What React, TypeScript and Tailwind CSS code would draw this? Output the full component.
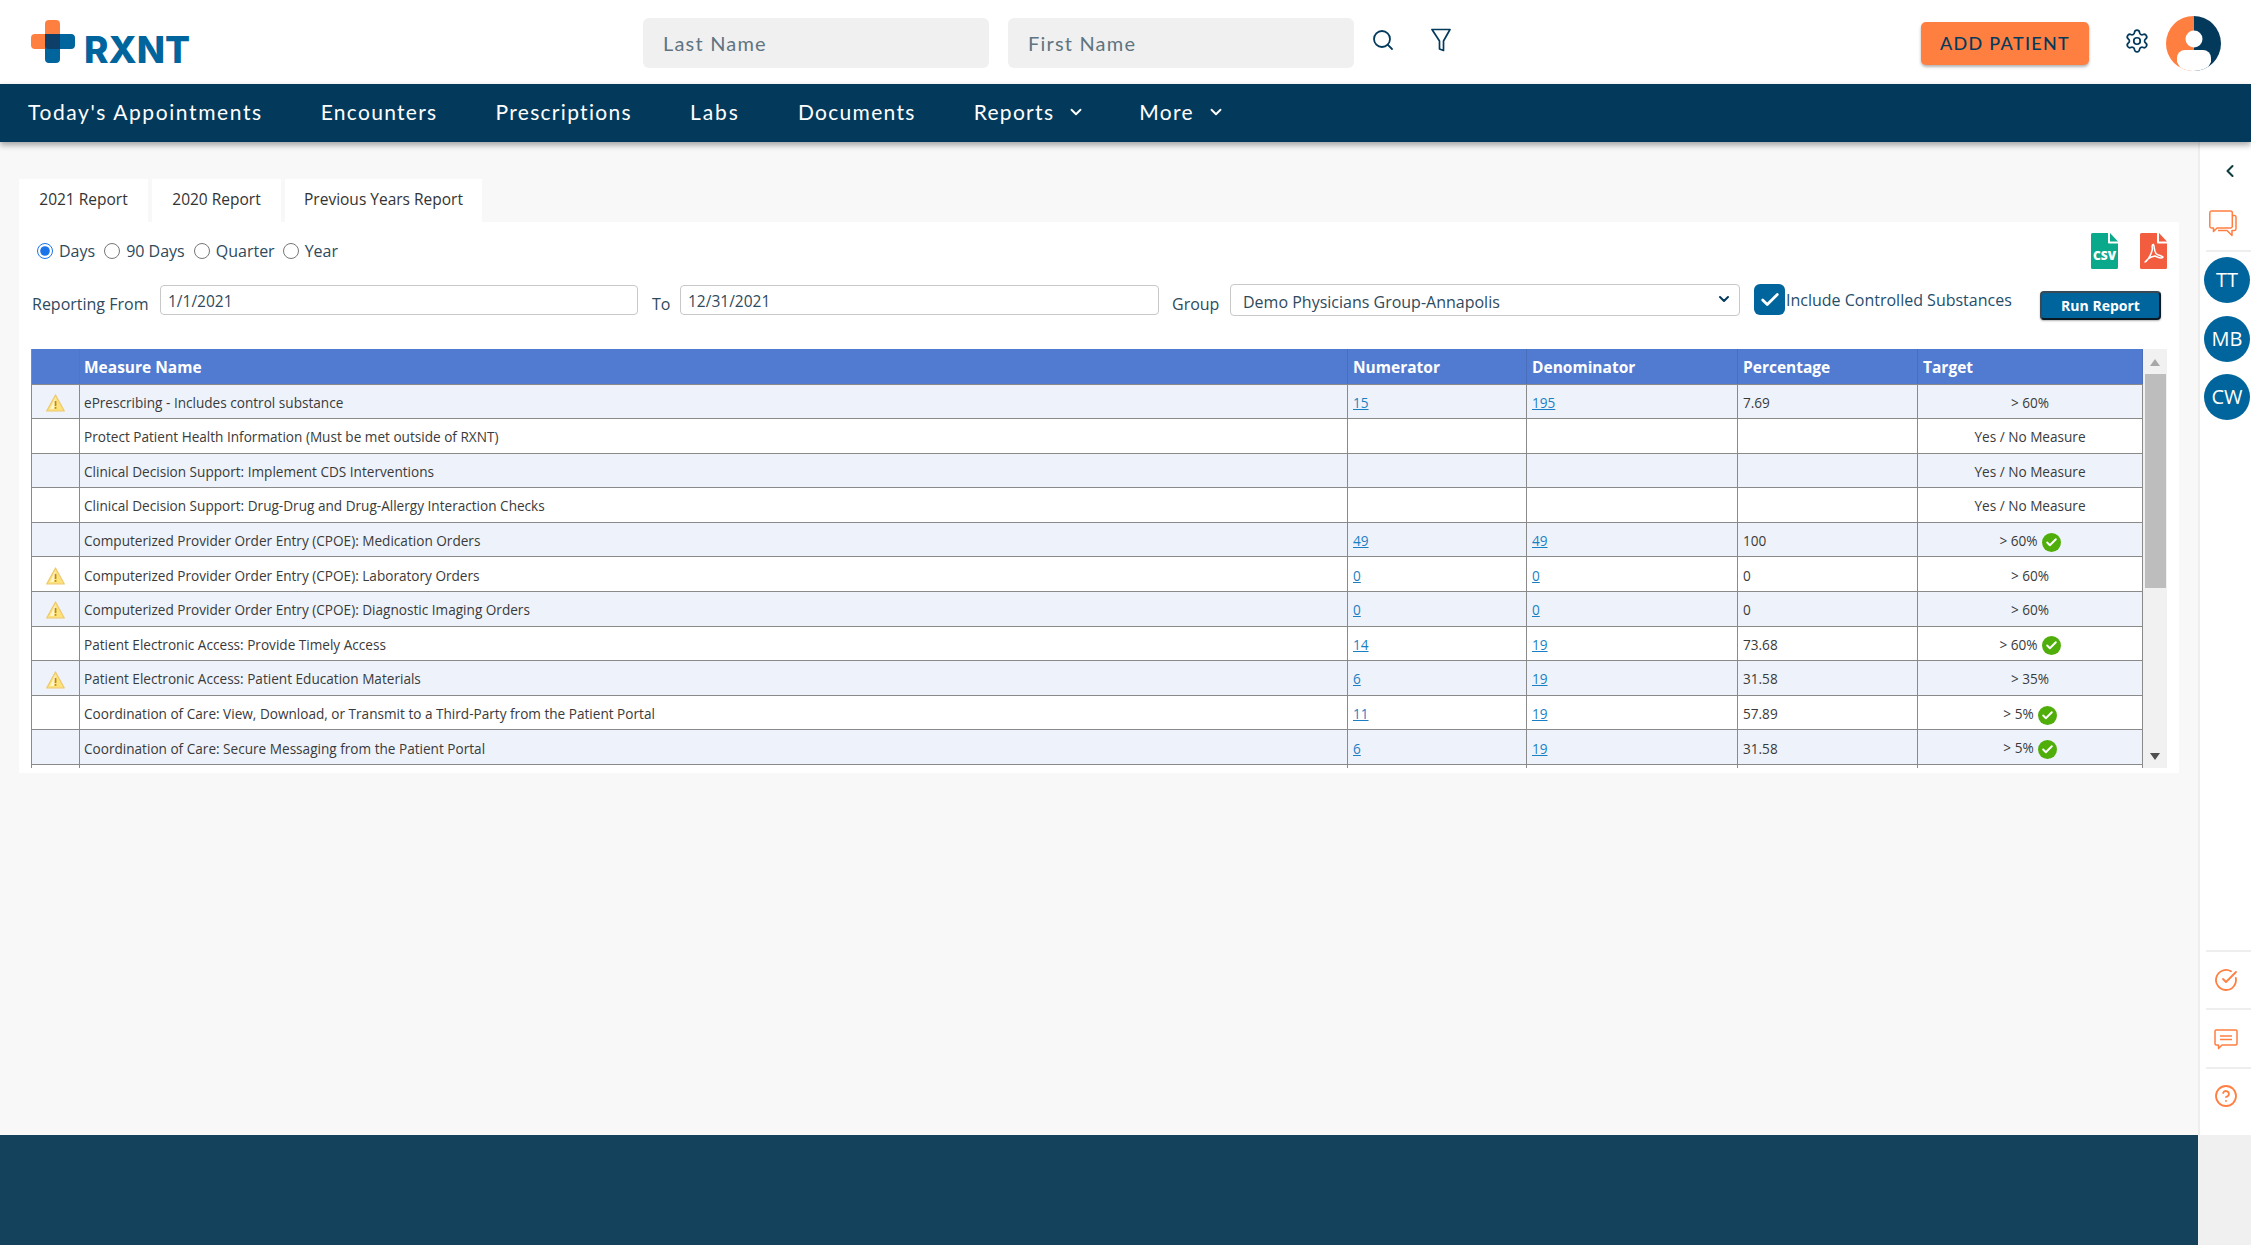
import React from 'react';
import { ChevronDown, ChevronLeft, CircleCheckBig, CircleHelp, Search, Settings, Check } from 'lucide-react';

type Row = { name: string; warn?: boolean; num?: string; den?: string; pct?: string; target: string; met?: boolean };

const rows: Row[] = [
  { name: 'ePrescribing - Includes control substance', warn: true, num: '15', den: '195', pct: '7.69', target: '> 60%' },
  { name: 'Protect Patient Health Information (Must be met outside of RXNT)', target: 'Yes / No Measure' },
  { name: 'Clinical Decision Support: Implement CDS Interventions', target: 'Yes / No Measure' },
  { name: 'Clinical Decision Support: Drug-Drug and Drug-Allergy Interaction Checks', target: 'Yes / No Measure' },
  { name: 'Computerized Provider Order Entry (CPOE): Medication Orders', num: '49', den: '49', pct: '100', target: '> 60%', met: true },
  { name: 'Computerized Provider Order Entry (CPOE): Laboratory Orders', warn: true, num: '0', den: '0', pct: '0', target: '> 60%' },
  { name: 'Computerized Provider Order Entry (CPOE): Diagnostic Imaging Orders', warn: true, num: '0', den: '0', pct: '0', target: '> 60%' },
  { name: 'Patient Electronic Access: Provide Timely Access', num: '14', den: '19', pct: '73.68', target: '> 60%', met: true },
  { name: 'Patient Electronic Access: Patient Education Materials', warn: true, num: '6', den: '19', pct: '31.58', target: '> 35%' },
  { name: 'Coordination of Care: View, Download, or Transmit to a Third-Party from the Patient Portal', num: '11', den: '19', pct: '57.89', target: '> 5%', met: true },
  { name: 'Coordination of Care: Secure Messaging from the Patient Portal', num: '6', den: '19', pct: '31.58', target: '> 5%', met: true },
];

const Logo = () => (
  <div className="flex items-end gap-[9px]">
    <svg width="44" height="43" viewBox="0 0 44 43">
      <path d="M14 4a4 4 0 0 1 4-4h7a4 4 0 0 1 4 4v25H4a4 4 0 0 1-4-4v-7a4 4 0 0 1 4-4h10z" fill="#ff7f41" />
      <path d="M14 14h26a4 4 0 0 1 4 4v7a4 4 0 0 1-4 4H29v10a4 4 0 0 1-4 4h-7a4 4 0 0 1-4-4z" fill="#00659c" />
      <path d="M14 14h15v15H18a4 4 0 0 1-4-4z" fill="#0d3f68" />
    </svg>
    <span className="font-['Inter',sans-serif] text-[37px] leading-[28px] font-extrabold text-[#00659c] h-[28px] -mb-px">RXNT</span>
  </div>
);

const Avatar = () => (
  <svg width="55" height="55" viewBox="0 0 55 55">
    <defs>
      <clipPath id="av"><circle cx="27.5" cy="27.5" r="27.5" /></clipPath>
    </defs>
    <g clipPath="url(#av)">
      <rect width="28" height="55" fill="#ff7f41" />
      <rect x="28" width="27" height="55" fill="#033a5c" />
      <circle cx="28" cy="23" r="8.5" fill="#fff" />
      <path d="M11 46v-4a8 8 0 0 1 8-8h18a8 8 0 0 1 8 8v4l-5 9H16z" fill="#fff" />
    </g>
  </svg>
);

const WarnIcon = () => (
  <svg width="19" height="18" viewBox="0 0 19 18" className="mx-auto block">
    <path d="M9.5 1 18.3 17H.7z" fill="#fde27c" stroke="#eec76e" strokeWidth="1.2" strokeLinejoin="round" />
    <path d="M9.5 3.5 4 15h4z" fill="#fff6cf" />
    <rect x="8.7" y="7" width="1.7" height="5" fill="#b98a17" />
    <rect x="8.7" y="13" width="1.7" height="1.8" fill="#b98a17" />
  </svg>
);

const MetIcon = () => (
  <span className="inline-flex items-center justify-center w-[19px] h-[19px] rounded-full bg-[#4fae0a] ml-[4px] align-middle">
    <Check size={13} color="#fff" strokeWidth={3.5} />
  </span>
);

const FileIcon = ({ color, children }: { color: string; children: React.ReactNode }) => (
  <svg width="27" height="36" viewBox="0 0 27 36">
    <path d="M1.5 0H17v9.5a1 1 0 0 0 1 1h9V34.5a1.5 1.5 0 0 1-1.500 1.500H1.500A1.500 1.500 0 0 1 0 34.500V1.500A1.500 1.500 0 0 1 1.500 0z" fill={color} />
    <path d="M19 0l8 8.500h-8z" fill={color} />
    {children}
  </svg>
);

const ChatIcon = () => (
  <svg width="28" height="27" viewBox="0 0 28 27" fill="none" stroke="#ff7f41" strokeWidth="1.5" strokeLinejoin="round">
    <path d="M24 5.500h1.500A1.800 1.800 0 0 1 27 7.300v11.500a1.800 1.800 0 0 1-1.500 1.700H23v5l-5-5H9" />
    <path d="M2.500 1h19a1.800 1.800 0 0 1 1.800 1.800v13.400a1.800 1.800 0 0 1-1.800 1.800H8l-3.500 3.500V18h-2A1.800 1.800 0 0 1 .8 16.200V2.800A1.800 1.800 0 0 1 2.500 1z" />
  </svg>
);

const CommentIcon = () => (
  <svg width="24" height="21" viewBox="0 0 24 21" fill="none" stroke="#ff7f41" strokeWidth="1.500" strokeLinejoin="round">
    <path d="M2.200 1h19.600A1.200 1.200 0 0 1 23 2.200v12.600a1.200 1.200 0 0 1-1.200 1.200H8l-3.500 3.500V16H2.200A1.200 1.200 0 0 1 1 14.800V2.200A1.200 1.200 0 0 1 2.200 1z" />
    <path d="M6 7h12M6 10.500h12" />
  </svg>
);

const SidebarDivider = () => <div className="h-[2px] bg-[#eeeeee] ml-[6px]" />;

const Initials = ({ text }: { text: string }) => (
  <div className="w-[46px] h-[46px] rounded-full bg-[#00659c] text-white text-[20px] flex items-center justify-center ml-[4px]">{text}</div>
);

const cellBorder = 'border-r border-b border-[#8a8a8a]';

const ReportTable = () => (
  <div className="flex h-[419px] overflow-hidden">
    <table className="table-fixed border-collapse w-[2111px] h-fit border-l border-[#8a8a8a] text-[13.6px] text-[#3a3a3a]">
      <colgroup>
        <col className="w-[48px]" />
        <col className="w-[1268px]" />
        <col className="w-[179px]" />
        <col className="w-[211px]" />
        <col className="w-[180px]" />
        <col className="w-[225px]" />
      </colgroup>
      <thead>
        <tr className="h-[35px] bg-[#507bd0] text-white text-[15.500px] font-bold text-left">
          <th className="border-r border-b border-[#6f6f9f] border-b-[#8a8a8a]" />
          <th className="px-[4px] pt-[3px] border-r border-b border-[#4a6fb8] border-b-[#8a8a8a]">Measure Name</th>
          <th className="px-[5px] pt-[3px] border-r border-b border-[#4a6fb8] border-b-[#8a8a8a]">Numerator</th>
          <th className="px-[5px] pt-[3px] border-r border-b border-[#4a6fb8] border-b-[#8a8a8a]">Denominator</th>
          <th className="px-[5px] pt-[3px] border-r border-b border-[#4a6fb8] border-b-[#8a8a8a]">Percentage</th>
          <th className="px-[5px] pt-[3px] border-r border-b border-[#4a6fb8] border-b-[#8a8a8a]">Target</th>
        </tr>
      </thead>
      <tbody>
        {rows.map((r, idx) => (
          <tr key={idx} className={`h-[34.600px] ${idx % 2 === 0 ? 'bg-[#eef3fb]' : 'bg-white'}`}>
            <td className={`${cellBorder} pt-[3px]`}>{r.warn && <WarnIcon />}</td>
            <td className={`${cellBorder} px-[4px] pt-[3px]`}>{r.name}</td>
            <td className={`${cellBorder} px-[5px] pt-[3px]`}>
              {r.num && <a href="#" className="text-[#1b7fc4] underline">{r.num}</a>}
            </td>
            <td className={`${cellBorder} px-[5px] pt-[3px]`}>
              {r.den && <a href="#" className="text-[#1b7fc4] underline">{r.den}</a>}
            </td>
            <td className={`${cellBorder} px-[5px] pt-[3px]`}>{r.pct}</td>
            <td className={`${cellBorder} text-center pt-[3px]`}>
              {r.target}
              {r.met && <MetIcon />}
            </td>
          </tr>
        ))}
        <tr className="h-[34.600px] bg-white">
          <td className="border-r border-[#8a8a8a]" />
          <td className="border-r border-[#8a8a8a]" />
          <td className="border-r border-[#8a8a8a]" />
          <td className="border-r border-[#8a8a8a]" />
          <td className="border-r border-[#8a8a8a]" />
          <td className="border-r border-[#8a8a8a]" />
        </tr>
      </tbody>
    </table>
    {/* scrollbar */}
    <div className="w-[25px] bg-[#f1f1f1] flex flex-col items-center shrink-0">
      <div className="h-[25px] flex items-center justify-center pt-[2px] pr-[2px]">
        <span className="w-0 h-0 border-x-[5.500px] border-x-transparent border-b-[7px] border-b-[#a8a8a8]" />
      </div>
      <div className="w-[21px] h-[214px] bg-[#bdbdbd]" />
      <div className="flex-1 flex items-end pb-[8px] pr-[2px]">
        <span className="w-0 h-0 border-x-[5.500px] border-x-transparent border-t-[7px] border-t-[#505050]" />
      </div>
    </div>
  </div>
);

export default function App() {
  return (
    <div className="w-[2251px] h-[1245px] flex flex-col bg-[#f8f8f8] overflow-hidden font-['Open_Sans',sans-serif]">
      {/* top bar */}
      <header className="h-[84px] bg-white flex items-center shrink-0 relative">
        <div className="ml-[31px] w-[612px] flex items-center -mt-[1px]"><Logo /></div>
        <div className="flex gap-[19px] font-['Lato',sans-serif] mt-[1px]">
          <input placeholder="Last Name" className="w-[346px] h-[50px] rounded-md bg-[#f0f0f0] px-[20px] text-[20px] tracking-[1.200px] placeholder:text-[#5f7480] outline-none" />
          <input placeholder="First Name" className="w-[346px] h-[50px] rounded-md bg-[#f0f0f0] px-[20px] text-[20px] tracking-[1.200px] placeholder:text-[#5f7480] outline-none" />
        </div>
        <Search size={24} color="#033a5c" strokeWidth={1.8} className="ml-[17px] -mt-[4px]" />
        <svg width="20" height="24" viewBox="0 0 20 24" fill="none" stroke="#033a5c" strokeWidth="1.700" strokeLinejoin="round" className="ml-[36px] -mt-[4px]">
          <path d="M1 1.500h18L12.500 13v9.500l-4-1.500v-8z" />
        </svg>
        <button className="ml-[470px] w-[168px] h-[43px] rounded-[5px] bg-[#ff7f41] text-[#033a5c] text-[18px] tracking-[1.300px] font-['Lato',sans-serif] font-medium shadow-[0_2px_3px_rgba(0,0,0,0.3)] mt-[2px]">ADD PATIENT</button>
        <Settings size={26} color="#033a5c" strokeWidth={1.6} className="ml-[35px] -mt-[3px]" />
        <div className="ml-[16px] mt-[3px]"><Avatar /></div>
      </header>

      {/* main nav */}
      <nav className="h-[58px] pb-[2px] bg-[#033a5c] flex items-center gap-[58px] pl-[28px] shrink-0 relative z-10 shadow-[0_3px_6px_rgba(0,0,0,0.35)] font-['Lato',sans-serif] text-white text-[21px] tracking-[1.300px]">
        <span className="tracking-[1.600px]">Today's Appointments</span>
        <span>Encounters</span>
        <span>Prescriptions</span>
        <span className="tracking-[2px]">Labs</span>
        <span>Documents</span>
        <span className="flex items-center gap-[13px]">Reports<ChevronDown size={18} strokeWidth={2.500} /></span>
        <span className="flex items-center gap-[13px] -ml-[4px]">More<ChevronDown size={18} strokeWidth={2.500} /></span>
      </nav>

      <div className="flex-1 flex min-h-0">
        <div className="w-[2198px] flex flex-col">
          <main className="flex-1 pt-[37px] pl-[19px] pr-[19px]">
            <div className="flex gap-[4px] text-[15.500px] text-[#333]">
              <div className="w-[129px] h-[43px] pb-[2px] bg-white flex items-center justify-center">2021 Report</div>
              <div className="w-[129px] h-[43px] pb-[2px] bg-white flex items-center justify-center">2020 Report</div>
              <div className="w-[197px] h-[43px] pb-[2px] bg-white flex items-center justify-center">Previous Years Report</div>
            </div>
            <section className="bg-white h-[551px] pt-[11px] pl-[12px] pr-[12px]">
              <div className="flex justify-between h-[36px] text-[16px] text-[#2f4a5c]">
                <div className="flex items-center ml-[6px]">
                  <label className="flex items-center gap-[6px] mr-[9px]">
                    <input type="radio" name="period" defaultChecked className="w-[16px] h-[16px] accent-[#1a73e8]" />Days
                  </label>
                  <label className="flex items-center gap-[6px] mr-[9px]">
                    <input type="radio" name="period" className="w-[16px] h-[16px]" />90 Days
                  </label>
                  <label className="flex items-center gap-[6px] mr-[8px]">
                    <input type="radio" name="period" className="w-[16px] h-[16px]" />Quarter
                  </label>
                  <label className="flex items-center gap-[6px]">
                    <input type="radio" name="period" className="w-[16px] h-[16px]" />Year
                  </label>
                </div>
                <div className="flex gap-[22px]">
                  <FileIcon color="#0aa98b">
                    <text x="13.500" y="26.500" textAnchor="middle" fontSize="12" fontWeight="800" fill="#fff" fontFamily="Open Sans">CSV</text>
                  </FileIcon>
                  <FileIcon color="#f25c3f">
                    <path d="M5 29c3-2 6-7 7.500-13-.8-3 0-5 1-4.500 1 .8.300 6 2.500 9 2 2 6 2 7 3.500-1 1.500-5 .5-8-1-3 .5-5 1.500-7 3-1 1.500-2.500 3-3 3z" fill="none" stroke="#fff" strokeWidth="1.500" strokeLinejoin="round" />
                  </FileIcon>
                </div>
              </div>
              <div className="flex items-center h-[35px] mt-[15px] ml-[1px] text-[16px] text-[#2f4a5c]">
                <span className="w-[128px] pt-[5px]">Reporting From</span>
                <input defaultValue="1/1/2021" className="w-[478px] h-[30px] -mt-[3px] pt-[1px] border border-[#c8c8c8] rounded-[4px] px-[7px] text-[15.500px] outline-none" />
                <span className="w-[42px] pl-[14px] pt-[5px]">To</span>
                <input defaultValue="12/31/2021" className="w-[479px] h-[30px] -mt-[3px] pt-[1px] border border-[#c8c8c8] rounded-[4px] px-[7px] text-[15.500px] outline-none" />
                <span className="w-[71px] pl-[13px] pt-[5px]">Group</span>
                <div className="relative w-[510px] h-[32px] -mt-[3px]">
                  <select defaultValue="demo" className="w-full h-full pt-[4px] border border-[#c8c8c8] rounded-[4px] pl-[12px] pr-[30px] appearance-none bg-white text-[16px] outline-none">
                    <option value="demo">Demo Physicians Group-Annapolis</option>
                  </select>
                  <ChevronDown size={16} strokeWidth={3} color="#033a5c" className="absolute right-[8px] top-[7px]" />
                </div>
                <div className="w-[31px] h-[31px] ml-[14px] -mt-[4px] rounded-md bg-[#00659c] flex items-center justify-center">
                  <Check size={22} color="#fff" strokeWidth={3} />
                </div>
                <span className="ml-[1px] -mt-[4px] text-[#1f4e6b]">Include Controlled Substances</span>
                <button className="ml-auto mr-[6px] w-[121px] h-[29px] mt-[7px] rounded-[4px] bg-[#00659c] border-2 border-[#3a4a55] border-b-[#0a1a24] border-r-[#0a1a24] text-white text-[14px] font-bold shadow-[0_1px_2px_rgba(0,0,0,0.3)]">Run Report</button>
              </div>
              <div className="mt-[30px]">
                <ReportTable />
              </div>
            </section>
          </main>
          <footer className="h-[110px] bg-[#14425c] shrink-0" />
        </div>

        {/* right rail */}
        <aside className="w-[53px] flex flex-col border-l-2 border-[#eeeeee] bg-white relative">
          <div className="flex-1 flex flex-col">
            <div className="h-[58px] pt-[19px] flex justify-center pl-[8px]">
              <ChevronLeft size={20} color="#0f3d3e" strokeWidth={2.500} />
            </div>
            <div className="h-[50px] flex items-center ml-[9px] pb-[4px]"><ChatIcon /></div>
            <SidebarDivider />
            <div className="flex flex-col gap-[12.500px] mt-[5px]">
              <Initials text="TT" />
              <Initials text="MB" />
              <Initials text="CW" />
            </div>
            <div className="mt-auto">
              <SidebarDivider />
              <div className="h-[56px] flex items-center justify-center"><CircleCheckBig size={24} color="#ff7f41" strokeWidth={1.800} /></div>
              <SidebarDivider />
              <div className="h-[57px] pt-[2px] flex items-center justify-center"><CommentIcon /></div>
              <SidebarDivider />
              <div className="h-[66px] flex items-start pt-[15px] justify-center"><CircleHelp size={24} color="#ff7f41" strokeWidth={1.800} /></div>
            </div>
          </div>
          <div className="h-[110px] bg-[#f0f0f0] shrink-0 -ml-[2px]" />
        </aside>
      </div>
    </div>
  );
}
